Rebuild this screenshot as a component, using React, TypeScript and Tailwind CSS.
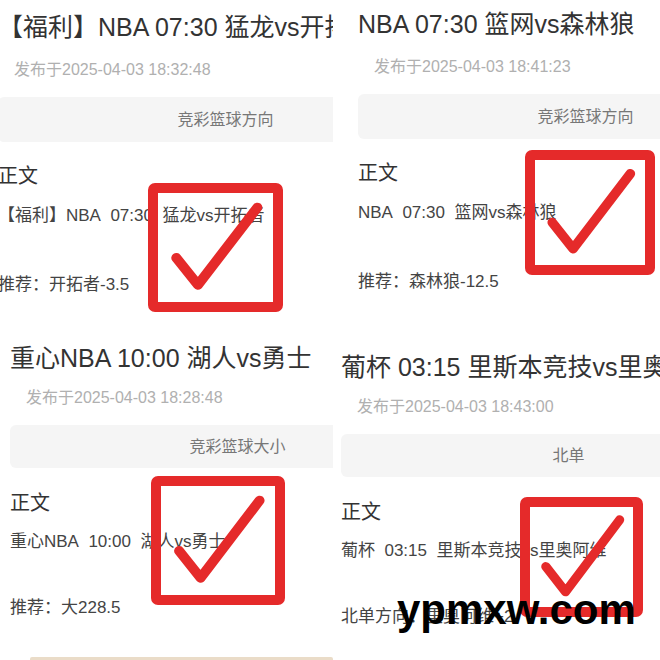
import React from "react";

type Post = {
  title: string;
  date: string;
  tag: string;
  body: string;
  rec: string;
};

const font = "font-['Liberation_Sans','Noto_Sans_CJK_SC',sans-serif]";

// top row cards and bottom row cards were cropped at slightly different scales
const rowA = {
  title: "h-[54px]",
  date: "h-[32px]",
  bar: "mt-[11px] h-[45px]",
  zw: "mt-[20px]",
  body: "mt-[12px]",
  rec: "mt-[41px]",
};
const rowB = {
  title: "h-[56px]",
  date: "h-[24px]",
  bar: "mt-[15px] h-[43px]",
  zw: "mt-[21px]",
  body: "mt-[11px]",
  rec: "mt-[38px]",
};

const Panel = ({
  post,
  row,
  box,
  inner,
  footer,
}: {
  post: Post;
  row: typeof rowA;
  box: string;
  inner: string;
  footer?: boolean;
}) => (
  <div className={`${box} relative flex flex-col overflow-hidden bg-white`}>
    <div className={`${inner} flex flex-col whitespace-nowrap`}>
      <div className={`${row.title} flex items-center text-[25px] leading-none text-[#333]`}>
        {post.title}
      </div>
      <div className={`${row.date} flex items-center pl-[16px] text-[16px] leading-none text-[#b0b0b0]`}>
        发布于{post.date}
      </div>
      <div
        className={`${row.bar} flex w-[455px] shrink-0 items-center justify-center rounded-[6px] bg-[#f5f5f5] text-[16px] text-[#777]`}
      >
        {post.tag}
      </div>
      <div className={`${row.zw} flex h-[28px] items-center text-[20px] text-[#333]`}>正文</div>
      <div className={`${row.body} flex h-[28px] items-center text-[17px] text-[#444]`}>
        {post.body}
      </div>
      <div className={`${row.rec} flex h-[28px] items-center text-[17px] text-[#444]`}>
        {post.rec}
      </div>
    </div>
    {footer && <div className="mt-auto ml-[30px] h-[3px] rounded-t-[2px] bg-[#eadcc8]" />}
  </div>
);

const CheckBox = ({ pos }: { pos: string }) => (
  <div className={`absolute ${pos} rounded-[7px] border-[10px] border-[#e52a2a]`}>
    <svg viewBox="0 0 100 100" preserveAspectRatio="none" className="absolute -inset-[10px] h-[calc(100%+20px)] w-[calc(100%+20px)]">
      <polyline
        points="21,58 37,79 81,19"
        fill="none"
        stroke="#e52a2a"
        strokeWidth="7.5"
        strokeLinecap="round"
        strokeLinejoin="round"
      />
    </svg>
  </div>
);

const posts: Post[] = [
  {
    title: "【福利】NBA 07:30 猛龙vs开拓者",
    date: "2025-04-03 18:32:48",
    tag: "竞彩篮球方向",
    body: "【福利】NBA\u00a0\u00a007:30\u00a0\u00a0猛龙vs开拓者",
    rec: "推荐：开拓者-3.5",
  },
  {
    title: "NBA 07:30 篮网vs森林狼",
    date: "2025-04-03 18:41:23",
    tag: "竞彩篮球方向",
    body: "NBA\u00a0\u00a007:30\u00a0\u00a0篮网vs森林狼",
    rec: "推荐：森林狼-12.5",
  },
  {
    title: "重心NBA 10:00 湖人vs勇士",
    date: "2025-04-03 18:28:48",
    tag: "竞彩篮球大小",
    body: "重心NBA\u00a0\u00a010:00\u00a0\u00a0湖人vs勇士",
    rec: "推荐：大228.5",
  },
  {
    title: "葡杯 03:15 里斯本竞技vs里奥阿维",
    date: "2025-04-03 18:43:00",
    tag: "北单",
    body: "葡杯\u00a0\u00a003:15\u00a0\u00a0里斯本竞技vs里奥阿维",
    rec: "北单方向：里奥阿维+2",
  },
];

export default function App() {
  return (
    <div className={`${font} relative flex h-[660px] w-[660px] overflow-hidden bg-white`}>
      <div className="flex w-[333px] flex-col">
        <Panel post={posts[0]} row={rowA} box="h-[330px]" inner="ml-[-2px]" />
        <Panel post={posts[2]} row={rowB} box="h-[330px]" inner="ml-[10px]" footer />
      </div>
      <div className="w-[2px] bg-[#f0f0f0]" />
      <div className="flex flex-1 flex-col">
        <Panel post={posts[1]} row={rowA} box="h-[339px]" inner="ml-[25px] -mt-[3px]" />
        <Panel post={posts[3]} row={rowB} box="h-[321px]" inner="ml-[8px]" />
      </div>

      <CheckBox pos="left-[148px] top-[183px] h-[129px] w-[135px]" />
      <CheckBox pos="left-[525px] top-[150px] h-[125px] w-[130px]" />
      <CheckBox pos="left-[151px] top-[476px] h-[129px] w-[134px]" />
      <CheckBox pos="left-[520px] top-[497px] h-[120px] w-[123px]" />

      <div className="absolute left-[397px] top-[589px] font-['Liberation_Sans',sans-serif] text-[42px] font-bold leading-none text-black">
        ypmxw.com
      </div>
    </div>
  );
}
